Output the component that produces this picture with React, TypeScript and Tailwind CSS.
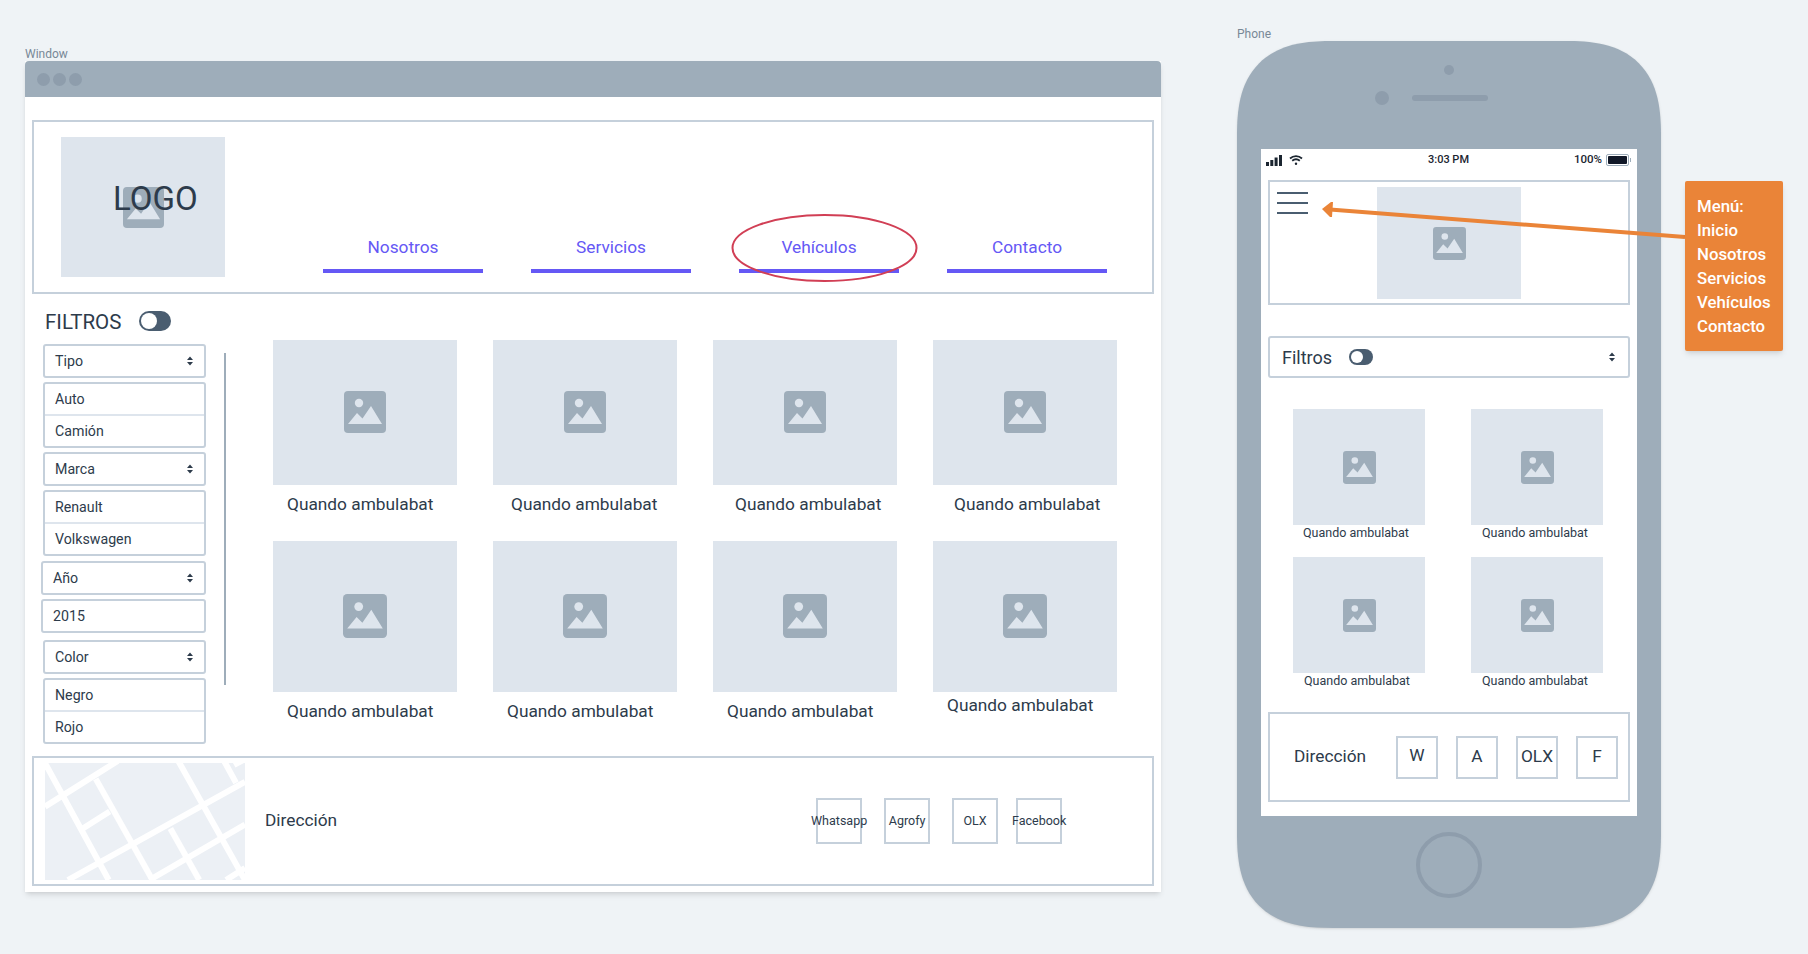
const ImageIcon = ({ className }: { className: string }) => (
  <svg viewBox="0 0 42 42" className={className}>
    <rect width="42" height="42" rx="4" fill="#9eadba" />
    <circle cx="15" cy="12" r="4.2" fill="#dee5ed" />
    <path d="M4 33 L13 22 L18.5 27.5 L27 15 L38 33 Z" fill="#dee5ed" />
  </svg>
);

const Arrows = () => (
  <svg viewBox="0 0 8 12" className="w-[6px] h-[10px]">
    <path d="M4 0 L8 4.6 H0 Z M4 12 L8 7.4 H0 Z" fill="#2d3b4b" />
  </svg>
);

const Toggle = ({ className }: { className: string }) => (
  <div className={`rounded-full bg-[#4a5d70] flex items-center p-[2px] ${className}`}>
    <div className="h-full aspect-square rounded-full bg-white" />
  </div>
);

const Select = ({ label, className = "" }: { label: string; className?: string }) => (
  <div className={`h-[34px] border-2 border-[#c5d0db] rounded-[3px] flex items-center justify-between pl-[10px] pr-[11px] ${className}`}>
    <span className="pt-[2px]">{label}</span>
    <Arrows />
  </div>
);

const List = ({ items, className = "" }: { items: string[]; className?: string }) => (
  <div className={`h-[66px] border-2 border-[#c5d0db] rounded-[3px] flex flex-col ${className}`}>
    <div className="h-[32px] flex items-center pl-[10px] pt-[2px] border-b-2 border-[#dee5ed]">{items[0]}</div>
    <div className="h-[30px] flex items-center pl-[10px] pt-[2px]">{items[1]}</div>
  </div>
);

const topCards = [
  { cap: "ml-[14px]" },
  { cap: "ml-[18px]" },
  { cap: "ml-[22px]" },
  { cap: "ml-[21px]" },
];

const bottomCards = [
  { cap: "ml-[14px] mt-[7px]" },
  { cap: "ml-[14px] mt-[7px]" },
  { cap: "ml-[14px] mt-[7px]" },
  { cap: "ml-[14px] mt-[1px]" },
];

const MapThumb = () => (
  <svg viewBox="0 0 201 118" preserveAspectRatio="none" className="w-[200px] h-[117px]">
    <rect width="201" height="118" fill="#ecf0f5" />
    <g stroke="#fff" strokeWidth="6" fill="none">
      <path d="M0 0 L64 118" />
      <path d="M51 16 L108 118" />
      <path d="M134 -2 L201 118" />
      <path d="M180 -2 L192 20" />
      <path d="M126 66 L155 118" />
      <path d="M38 66 L65 49" />
      <path d="M0 44 L73 -2" />
      <path d="M23 118 L201 19" />
      <path d="M105 118 L201 62" />
      <path d="M182 118 L201 106" />
      <path d="M190 2 L201 -4" />
    </g>
  </svg>
);

const SocialBox = ({ label, className }: { label: string; className: string }) => (
  <div className={`w-[46px] h-[46px] border-2 border-[#c5d0db] flex items-center justify-center whitespace-nowrap text-[12.5px] ${className}`}>
    {label}
  </div>
);

const navItems = ["Nosotros", "Servicios", "Vehículos", "Contacto"];

const Window = () => (
  <div className="absolute left-[25px] top-[61px] w-[1136px] h-[831px] bg-white shadow-md flex flex-col">
    <div className="h-9 bg-[#9eadba] rounded-t-[4px] flex items-center gap-[3px] pl-[12px]">
      <div className="w-[13px] h-[13px] rounded-full bg-[#8e9dac]" />
      <div className="w-[13px] h-[13px] rounded-full bg-[#8e9dac]" />
      <div className="w-[13px] h-[13px] rounded-full bg-[#8e9dac]" />
    </div>
    <div className="mx-[7px] mt-[23px] h-[174px] border-2 border-[#c5d0db] flex">
      <div className="relative ml-[27px] mt-[15px] w-[164px] h-[140px] bg-[#dee5ed] flex items-center justify-center">
        <ImageIcon className="w-[41px] h-[41px]" />
        <span className="absolute left-[52px] top-[41px] text-[33px] leading-[42px]">LOGO</span>
      </div>
      <div className="ml-[98px] mt-[107px] flex gap-[48px]">
        {navItems.map((item) => (
          <div key={item} className="w-[160px] h-[44px] flex flex-col items-center justify-between">
            <span className="text-[#6558f5] text-[17.3px] leading-[36px]">{item}</span>
            <div className="w-full h-1 bg-[#6558f5]" />
          </div>
        ))}
      </div>
    </div>
    <div className="h-[462px] flex">
      <div className="ml-[18px] w-[163px] pt-[15px] text-[14.2px] flex flex-col">
        <div className="h-[24px] flex items-center ml-[2px]">
          <span className="text-[20.5px] mt-[2px]">FILTROS</span>
          <Toggle className="ml-[18px] w-[32px] h-[20px]" />
        </div>
        <Select label="Tipo" className="mt-[11px]" />
        <List items={["Auto", "Camión"]} className="mt-[4px]" />
        <Select label="Marca" className="mt-[4px]" />
        <List items={["Renault", "Volkswagen"]} className="mt-[4px]" />
        <Select label="Año" className="mt-[5px] -ml-[2px]" />
        <div className="mt-[4px] -ml-[2px] h-[34px] border-2 border-[#c5d0db] rounded-[3px] flex items-center pl-[10px] pt-[2px]">2015</div>
        <Select label="Color" className="mt-[7px]" />
        <List items={["Negro", "Rojo"]} className="mt-[4px]" />
      </div>
      <div className="ml-[18px] mt-[59px] w-[2px] h-[332px] bg-[#9eadba]" />
      <div className="ml-[47px] mt-[46px] flex flex-col text-[17.3px]">
        <div className="flex gap-[36px] h-[201px]">
          {topCards.map((c, i) => (
            <div key={i} className="w-[184px]">
              <div className="h-[145px] bg-[#dee5ed] flex items-center justify-center pb-[2px]">
                <ImageIcon className="w-[42px] h-[42px]" />
              </div>
              <div className={`mt-[7px] leading-[24px] whitespace-nowrap ${c.cap}`}>Quando ambulabat</div>
            </div>
          ))}
        </div>
        <div className="flex gap-[36px]">
          {bottomCards.map((c, i) => (
            <div key={i} className="w-[184px]">
              <div className="h-[151px] bg-[#dee5ed] flex items-center justify-center pb-[2px]">
                <ImageIcon className="w-[44px] h-[44px]" />
              </div>
              <div className={`leading-[24px] whitespace-nowrap ${c.cap}`}>Quando ambulabat</div>
            </div>
          ))}
        </div>
      </div>
    </div>
    <div className="mx-[7px] h-[130px] border-2 border-[#c5d0db] flex items-center">
      <div className="ml-[11px] flex"><MapThumb /></div>
      <span className="ml-[20px] text-[17.3px]">Dirección</span>
      <SocialBox label="Whatsapp" className="ml-[479px]" />
      <SocialBox label="Agrofy" className="ml-[22px]" />
      <SocialBox label="OLX" className="ml-[22px]" />
      <SocialBox label="Facebook" className="ml-[18px]" />
    </div>
  </div>
);

const phoneCards = ["ml-[10px]", "ml-[11px]", "ml-[11px]", "ml-[11px]"];

const Phone = () => (
  <div className="absolute left-[1237px] top-[41px] w-[424px] h-[887px] rounded-[96px] [corner-shape:superellipse(1.4)] bg-[#9eadba] shadow-sm flex flex-col items-center">
    <div className="mt-[24px] w-[10px] h-[10px] rounded-full bg-[#8e9dac]" />
    <div className="mt-[16px] h-[14px] w-[113px] flex items-center gap-[23px] -translate-x-[18px]">
      <div className="w-[14px] h-[14px] rounded-full bg-[#8e9dac]" />
      <div className="w-[76px] h-[6px] rounded-full bg-[#8e9dac]" />
    </div>
    <div className="mt-[44px] w-[376px] h-[667px] bg-white flex flex-col items-center">
      <div className="w-full h-[22px] flex items-center justify-between pl-[5px] pr-[6px] text-[11px] font-medium text-[#1b2530]">
        <div className="flex items-center gap-[7px] w-[96px]">
          <svg viewBox="0 0 16 11" className="w-[16px] h-[11px]">
            <path d="M0 7h3v4H0z M4.300 5h3v6h-3z M8.600 2.500h3V11h-3z M13 0h3v11h-3z" fill="#1b2530" />
          </svg>
          <svg viewBox="0 0 14 10" className="w-[14px] h-[10px]" fill="none" stroke="#1b2530" strokeWidth="1.800">
            <path d="M1 3.500a9 9 0 0 1 12 0 M3.200 5.800a6 6 0 0 1 7.600 0" />
            <circle cx="7" cy="8.700" r="1.200" fill="#1b2530" stroke="none" />
          </svg>
        </div>
        <span>3:03 PM</span>
        <div className="flex items-center justify-end gap-[4px] w-[96px]">
          <span className="text-[11.5px]">100%</span>
          <div className="w-[23px] h-[12px] border border-[#9eadba] rounded-[2px] p-[1px] flex">
            <div className="grow bg-[#111827] rounded-[1px]" />
          </div>
          <div className="-ml-[3px] w-[1px] h-[4px] bg-[#9eadba]" />
        </div>
      </div>
      <div className="mt-[9px] w-[362px] h-[125px] border-2 border-[#c5d0db] flex relative">
        <div className="ml-[7px] mt-[10px] w-[31px] flex flex-col gap-[8px]">
          <div className="h-[2px] bg-[#4a5d70]" />
          <div className="h-[2px] bg-[#4a5d70]" />
          <div className="h-[2px] bg-[#4a5d70]" />
        </div>
        <div className="ml-[69px] mt-[5px] w-[144px] h-[112px] bg-[#dee5ed] flex items-center justify-center">
          <ImageIcon className="w-[33px] h-[33px]" />
        </div>
      </div>
      <div className="mt-[31px] w-[362px] h-[42px] border-2 border-[#c5d0db] rounded-[3px] flex items-center pl-[12px] pr-[13px] text-[18px]">
        <span>Filtros</span>
        <Toggle className="ml-[17px] w-[24px] h-[16px]" />
        <div className="ml-auto"><Arrows /></div>
      </div>
      <div className="mt-[31px] w-[312px] grid grid-cols-[132px_132px] gap-x-[46px] gap-y-[4px] text-[12.5px]">
        {phoneCards.map((cap, i) => (
          <div key={i} className="h-[144px]">
            <div className="h-[116px] bg-[#dee5ed] flex items-center justify-center">
              <ImageIcon className="w-[33px] h-[33px]" />
            </div>
            <div className={`leading-[16px] whitespace-nowrap ${cap}`}>Quando ambulabat</div>
          </div>
        ))}
      </div>
      <div className="mt-[11px] w-[362px] h-[90px] border-2 border-[#c5d0db] flex items-center text-[17.3px]">
        <span className="ml-[24px] w-[102px]">Dirección</span>
        <div className="w-[42px] h-[43px] border-2 border-[#c5d0db] flex items-center justify-center pb-[3px]">W</div>
        <div className="ml-[18px] w-[42px] h-[43px] border-2 border-[#c5d0db] flex items-center justify-center">A</div>
        <div className="ml-[18px] w-[42px] h-[43px] border-2 border-[#c5d0db] flex items-center justify-center">OLX</div>
        <div className="ml-[18px] w-[42px] h-[43px] border-2 border-[#c5d0db] flex items-center justify-center">F</div>
      </div>
    </div>
    <div className="mt-[16px] w-[66px] h-[66px] rounded-full border-4 border-[#8e9dac]" />
  </div>
);

export default function App() {
  return (
    <div className="relative w-[1808px] h-[954px] overflow-hidden bg-[#eff3f6] text-[#2d3b4b] font-['Roboto',sans-serif]">
      <span className="absolute left-[25px] top-[46px] text-xs text-[#788896]">Window</span>
      <Window />
      <span className="absolute left-[1237px] top-[26px] text-xs text-[#788896]">Phone</span>
      <Phone />
      {/* annotations */}
      <svg viewBox="0 0 190 75" className="absolute left-[730px] top-[212px] w-[190px] h-[75px]">
        <ellipse cx="94.500" cy="36" rx="92" ry="33" fill="none" stroke="#d13f55" strokeWidth="2" />
      </svg>
      <svg viewBox="0 0 370 40" className="absolute left-[1318px] top-[200px] w-[370px] h-[40px]">
        <path d="M367 37 L12 9.500" stroke="#ea8438" strokeWidth="4" fill="none" />
        <path d="M4 9 L13 2 L15 2 L14 17 L12 17 Z" fill="#ea8438" />
      </svg>
      <div className="absolute left-[1685px] top-[181px] w-[98px] h-[170px] bg-[#ea8438] rounded-[2px] shadow-md pl-[12px] pt-[13px] text-white text-[16.8px] font-medium leading-[24px]">
        <div>Menú:</div>
        <div>Inicio</div>
        <div>Nosotros</div>
        <div>Servicios</div>
        <div>Vehículos</div>
        <div>Contacto</div>
      </div>
    </div>
  );
}
